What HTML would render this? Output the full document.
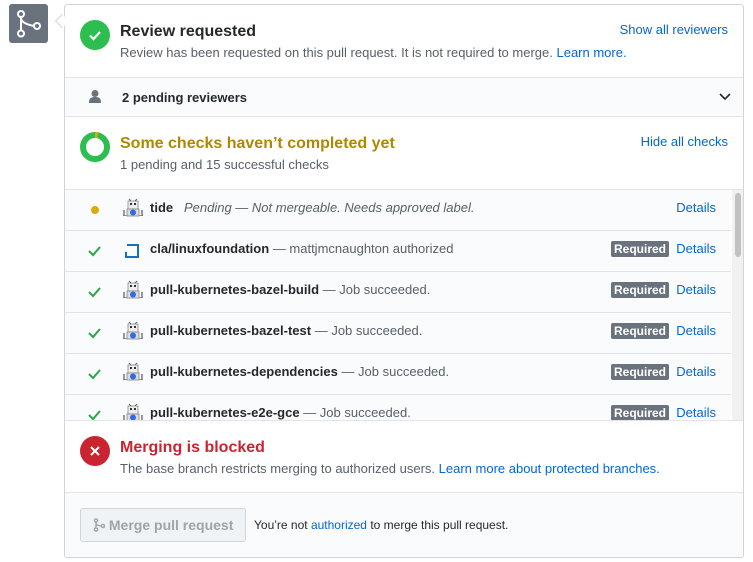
<!DOCTYPE html>
<html><head><style>
*{box-sizing:border-box;margin:0;padding:0}
body{width:753px;height:562px;background:#fff;font-family:"Liberation Sans",sans-serif;font-size:13px;color:#24292e;position:relative;overflow:hidden}
.a{position:absolute}
a{color:#0366d6;text-decoration:none}
.box{left:64px;top:4px;width:680px;height:554px;border:1px solid #d1d5da;border-radius:3px;background:#fff;overflow:hidden}
.row{position:absolute;left:0;width:666px;height:41px;border-bottom:1px solid #e1e4e8;background:#fafbfc}
.req{position:absolute;right:62px;top:10px;background:#6a737d;color:#fff;font-weight:bold;font-size:12px;padding:1px 3px;border-radius:2px}
.det{position:absolute;right:15px;top:10px;color:#0366d6;font-size:13px}
.nm{position:absolute;left:85px;top:10px;color:#586069;white-space:nowrap}
.nm b{color:#24292e}
.ck{position:absolute;left:23px;top:14px}
.bot{position:absolute;left:57px;top:8px}
</style></head><body>
<div class="a" style="left:9px;top:4px;width:39px;height:39px;background:#6a737d;border-radius:3px">
<svg width="39" height="39" viewBox="0 0 39 39"><g fill="none" stroke="#fff" stroke-width="2"><circle cx="12" cy="10" r="3"/><circle cx="12" cy="29.5" r="3"/><circle cx="28" cy="22" r="3"/><path d="M12 13v13.5M12 14c0 5 8 7 13 8"/></g></svg></div>
<div class="a" style="left:57px;top:16px;width:10px;height:10px;background:#fff;border-left:1px solid #d1d5da;border-bottom:1px solid #d1d5da;transform:rotate(45deg);z-index:2"></div>
<svg width="0" height="0" style="position:absolute"><defs><g id="bot"><rect x="1" y="17" width="20" height="1" fill="#999"/><rect x="6" y="3" width="10" height="8" fill="#eee" stroke="#888" stroke-width=".8"/><rect x="8" y="5" width="2" height="2" fill="#333"/><rect x="12" y="5" width="2" height="2" fill="#333"/><path d="M7 1l2 2M15 1l-2 2" stroke="#666"/><rect x="5" y="11" width="12" height="7" fill="#ddd" stroke="#888" stroke-width=".8"/><circle cx="11" cy="14.5" r="3" fill="#326ce5"/><path d="M2 12v6M20 12v6" stroke="#777" stroke-width="1.5"/></g><path id="ck" d="M1 6l4 4 7-8" stroke="#28a745" stroke-width="2" fill="none"/></defs></svg>
<div class="a box">
<svg class="a" style="left:15px;top:15px" width="30" height="30"><circle cx="15" cy="15" r="15" fill="#2cbe4e"/><path d="M10 15.5l3.5 3.5 6.5-7" stroke="#fff" stroke-width="2.2" fill="none"/></svg>
<div class="a" style="left:55px;top:18px;font-size:16px;font-weight:bold">Review requested</div>
<div class="a" style="left:55px;top:40px;color:#586069">Review has been requested on this pull request. It is not required to merge. <a>Learn more.</a></div>
<div class="a" style="right:15px;top:17px"><a>Show all reviewers</a></div>
<div class="a" style="left:0;top:72px;width:680px;height:40px;background:#fafbfc;border-top:1px solid #e1e4e8;border-bottom:1px solid #e1e4e8">
<svg class="a" style="left:23px;top:11px" width="14" height="16"><circle cx="7" cy="4.5" r="3.5" fill="#6a737d"/><path d="M1 14c0-5 2-6 6-6s6 1 6 6z" fill="#6a737d"/></svg>
<div class="a" style="left:57px;top:12px;font-weight:bold">2 pending reviewers</div>
<svg class="a" style="right:14px;top:14px" width="12" height="10"><path d="M1 2l5 5 5-5" stroke="#24292e" stroke-width="1.6" fill="none"/></svg></div>
<svg class="a" style="left:15px;top:127px" width="30" height="30"><circle cx="15" cy="15" r="12" stroke="#2cbe4e" stroke-width="6" fill="none"/><path d="M15 0a15 15 0 0 1 3 .3L17.4 6A9 9 0 0 0 15 6z" fill="#dbab09"/></svg>
<div class="a" style="left:55px;top:130px;font-size:16px;font-weight:bold;color:#b08800">Some checks haven’t completed yet</div>
<div class="a" style="left:55px;top:152px;color:#586069">1 pending and 15 successful checks</div>
<div class="a" style="right:15px;top:129px"><a>Hide all checks</a></div>
<div class="a" style="left:0;top:184px;width:680px;height:232px;border-top:1px solid #e1e4e8;overflow:hidden">
<div class="a" style="right:0;top:0;width:13px;height:232px;background:#f1f1f1"><div style="margin:3px 3px;width:6px;height:64px;background:#c1c1c1;border-radius:3px"></div></div>
<div class="row" style="top:0"><div class="a" style="left:26px;top:16px;width:8px;height:8px;border-radius:4px;background:#dbab09"></div><svg class="bot" width="22" height="22"><use href="#bot"/></svg><div class="nm"><b>tide</b> &nbsp; <i>Pending — Not mergeable. Needs approved label.</i></div><div class="det">Details</div></div>
<div class="row" style="top:41px"><svg class="ck" width="14" height="12"><use href="#ck"/></svg><svg class="bot" style="left:60px;top:13px" width="14" height="14"><path d="M2 0h12v14H0V8h2v4h10V2H2z" fill="#1872b8"/></svg><div class="nm"><b>cla/linuxfoundation</b> — mattjmcnaughton authorized</div><span class="req">Required</span><div class="det">Details</div></div>
<div class="row" style="top:82px"><svg class="ck" width="14" height="12"><use href="#ck"/></svg><svg class="bot" width="22" height="22"><use href="#bot"/></svg><div class="nm"><b>pull-kubernetes-bazel-build</b> — Job succeeded.</div><span class="req">Required</span><div class="det">Details</div></div>
<div class="row" style="top:123px"><svg class="ck" width="14" height="12"><use href="#ck"/></svg><svg class="bot" width="22" height="22"><use href="#bot"/></svg><div class="nm"><b>pull-kubernetes-bazel-test</b> — Job succeeded.</div><span class="req">Required</span><div class="det">Details</div></div>
<div class="row" style="top:164px"><svg class="ck" width="14" height="12"><use href="#ck"/></svg><svg class="bot" width="22" height="22"><use href="#bot"/></svg><div class="nm"><b>pull-kubernetes-dependencies</b> — Job succeeded.</div><span class="req">Required</span><div class="det">Details</div></div>
<div class="row" style="top:205px"><svg class="ck" width="14" height="12"><use href="#ck"/></svg><svg class="bot" width="22" height="22"><use href="#bot"/></svg><div class="nm"><b>pull-kubernetes-e2e-gce</b> — Job succeeded.</div><span class="req">Required</span><div class="det">Details</div></div>
</div>
<div class="a" style="left:0;top:415px;width:680px;border-top:1px solid #e1e4e8"></div>
<svg class="a" style="left:15px;top:431px" width="30" height="30"><circle cx="15" cy="15" r="15" fill="#cb2431"/><path d="M11 11l8 8M19 11l-8 8" stroke="#fff" stroke-width="2"/></svg>
<div class="a" style="left:55px;top:434px;font-size:16px;font-weight:bold;color:#cb2431">Merging is blocked</div>
<div class="a" style="left:55px;top:456px;color:#586069">The base branch restricts merging to authorized users. <a>Learn more about protected branches.</a></div>
<div class="a" style="left:0;top:487px;width:680px;height:67px;background:#fafbfc;border-top:1px solid #e1e4e8">
<div class="a" style="left:15px;top:15px;width:166px;height:34px;border:1px solid #d1d5da;border-radius:3px;background:#eff3f6;color:#a0a4a8;font-weight:bold;font-size:14px;padding:8px 0 0 12px;white-space:nowrap"><svg width="12" height="14" style="vertical-align:-2px"><g fill="none" stroke="#a0a4a8" stroke-width="1.4"><circle cx="3" cy="2.5" r="1.6"/><circle cx="3" cy="11.5" r="1.6"/><circle cx="10" cy="8" r="1.6"/><path d="M3 4v6M3 5c0 2 3 3 5.5 3"/></g></svg> Merge pull request</div>
<div class="a" style="left:189px;top:25px;font-size:12px">You’re not <a>authorized</a> to merge this pull request.</div>
</div>
</div>
</body></html>
